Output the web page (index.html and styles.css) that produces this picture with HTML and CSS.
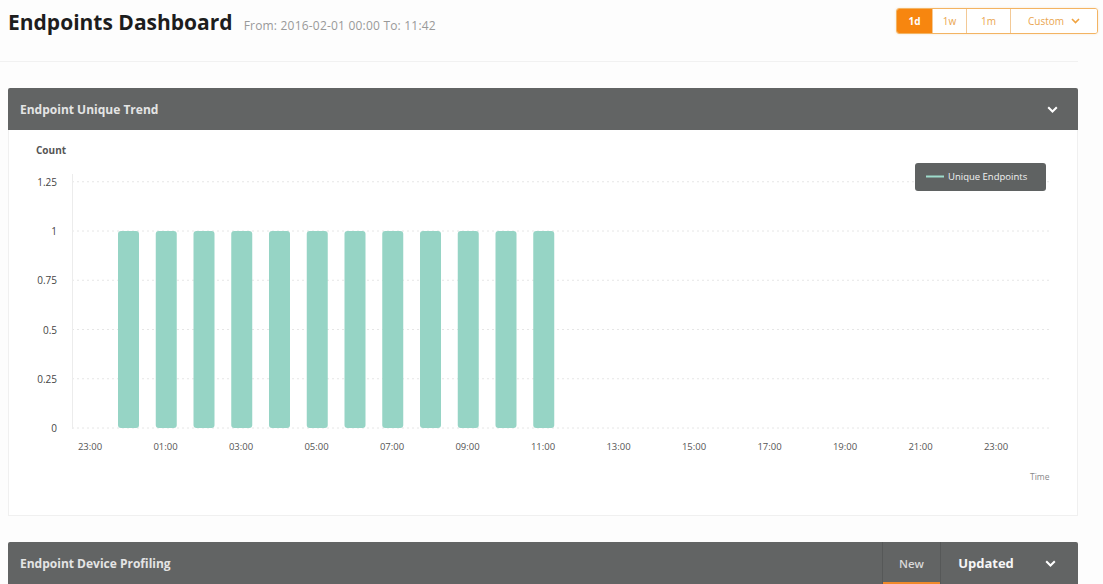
FILE: index.html
```html
<!DOCTYPE html>
<html lang="en">
<head>
  <meta charset="UTF-8" />
  <meta name="viewport" content="width=device-width, initial-scale=1.0" />
  <title>Endpoints Dashboard</title>
  <link rel="stylesheet" href="styles.css">
</head>
<body>
  <div class="page">
    <div class="top">
      <div class="title-wrap">
        <h1>Endpoints Dashboard</h1>
        <span class="range-text">From: 2016-02-01 00:00 To: 11:42</span>
      </div>
      <div class="ranges">
        <span class="rng active">1d</span>
        <span class="rng">1w</span>
        <span class="rng">1m</span>
        <span class="rng custom">Custom
          <svg width="9" height="6" viewBox="0 0 9 6"><path d="M1 1l3.5 3.5L8 1" fill="none" stroke="#f0a340" stroke-width="1.6"/></svg>
        </span>
      </div>
    </div>

    <div class="panel">
      <div class="panel-head">
        <span class="panel-title">Endpoint Unique Trend</span>
        <svg class="chev" width="11" height="7" viewBox="0 0 11 7"><path d="M1.2 1.2l4.3 4.3 4.3-4.3" fill="none" stroke="#fff" stroke-width="2"/></svg>
      </div>
      <div class="panel-body">
        <svg class="chart" width="1068" height="385" viewBox="0 0 1068 385">
          <text x="27" y="24" class="axis-title">Count</text>

          <g class="grid">
            <line x1="63" y1="51.75" x2="1042" y2="51.75"/>
            <line x1="63" y1="101" x2="1042" y2="101"/>
            <line x1="63" y1="150.25" x2="1042" y2="150.25"/>
            <line x1="63" y1="199.5" x2="1042" y2="199.5"/>
            <line x1="63" y1="248.75" x2="1042" y2="248.75"/>
            <line x1="63" y1="298" x2="1042" y2="298"/>
          </g>
          <line x1="63.5" y1="44" x2="63.5" y2="299" class="yaxis"/>

          <g class="ylab">
            <text x="48" y="56">1.25</text>
            <text x="48" y="105">1</text>
            <text x="48" y="154">0.75</text>
            <text x="48" y="204">0.5</text>
            <text x="48" y="253">0.25</text>
            <text x="48" y="302">0</text>
          </g>

          <g class="bars">
            <rect x="109" y="101" width="21" height="197" rx="3"/>
            <rect x="146.75" y="101" width="21" height="197" rx="3"/>
            <rect x="184.5" y="101" width="21" height="197" rx="3"/>
            <rect x="222.25" y="101" width="21" height="197" rx="3"/>
            <rect x="260" y="101" width="21" height="197" rx="3"/>
            <rect x="297.75" y="101" width="21" height="197" rx="3"/>
            <rect x="335.5" y="101" width="21" height="197" rx="3"/>
            <rect x="373.25" y="101" width="21" height="197" rx="3"/>
            <rect x="411" y="101" width="21" height="197" rx="3"/>
            <rect x="448.75" y="101" width="21" height="197" rx="3"/>
            <rect x="486.5" y="101" width="21" height="197" rx="3"/>
            <rect x="524.25" y="101" width="21" height="197" rx="3"/>
          </g>

          <g class="xlab">
            <text x="81" y="320">23:00</text>
            <text x="156.5" y="320">01:00</text>
            <text x="232" y="320">03:00</text>
            <text x="307.5" y="320">05:00</text>
            <text x="383" y="320">07:00</text>
            <text x="458.5" y="320">09:00</text>
            <text x="534" y="320">11:00</text>
            <text x="609.5" y="320">13:00</text>
            <text x="685" y="320">15:00</text>
            <text x="760.5" y="320">17:00</text>
            <text x="836" y="320">19:00</text>
            <text x="911.5" y="320">21:00</text>
            <text x="987" y="320">23:00</text>
          </g>

          <text x="1021" y="350" class="axis-note">Time</text>

          <rect x="906" y="33" width="131" height="28" rx="3" class="legend-box"/>
          <line x1="917" y1="46.5" x2="935" y2="46.5" class="legend-line"/>
          <text x="939" y="50" class="legend-text">Unique Endpoints</text>
        </svg>
      </div>
    </div>

    <div class="panel panel-second">
      <div class="panel-head">
        <span class="panel-title">Endpoint Device Profiling</span>
        <div class="tabs">
          <span class="tab tab-new">New</span>
          <span class="tab tab-updated">Updated</span>
          <svg class="chev" width="11" height="7" viewBox="0 0 11 7"><path d="M1.2 1.2l4.3 4.3 4.3-4.3" fill="none" stroke="#fff" stroke-width="2"/></svg>
        </div>
      </div>
    </div>
  </div>
</body>
</html>
```

FILE: styles.css
```css
body {
  margin: 0;
  background: #fdfdfd;
  font-family: "Open Sans", Arial, sans-serif;
  color: #333;
  overflow: hidden;
}
.page {
  padding: 0 5px 0 8px;
}
.top {
  display: flex;
  justify-content: space-between;
  align-items: flex-start;
  height: 61px;
  border-bottom: 1px solid #f1f1f1;
  margin-right: 20px;
  margin-left: -8px;
  padding-left: 8px;
}
.title-wrap {
  display: flex;
  align-items: baseline;
  padding-top: 8px;
}
h1 {
  margin: 0;
  font-size: 21px;
  font-weight: 700;
  color: #1d1d1d;
  letter-spacing: 0;
}
.range-text {
  margin-left: 11px;
  font-size: 12px;
  color: #999;
  letter-spacing: 0.2px;
}
.ranges {
  display: flex;
  margin-top: 8px;
  margin-right: -20px;
  border: 1px solid #f3b463;
  border-radius: 3px;
  height: 24px;
  overflow: hidden;
  box-shadow: 0 0 2px rgba(240, 160, 60, 0.3);
}
.rng {
  display: flex;
  align-items: center;
  justify-content: center;
  font-size: 10px;
  color: #eaa54f;
  border-left: 1px solid #f3c996;
  width: 33px;
  background: #fff;
}
.rng:first-child {
  border-left: none;
}
.rng.active {
  background: #f7860f;
  color: #fff;
  font-weight: 700;
  width: 35px;
}
.rng:nth-child(3) {
  width: 43px;
}
.rng.custom {
  width: 86px;
  gap: 7px;
}
.panel {
  margin-top: 26px;
  margin-right: 20px;
}
.panel-head {
  display: flex;
  align-items: center;
  justify-content: space-between;
  height: 42px;
  background: #626464;
  border-radius: 2px 2px 0 0;
  padding: 0 20px 0 12px;
}
.panel-title {
  font-size: 12px;
  font-weight: 700;
  color: #e4e4e4;
}
.chev {
  display: block;
}
.panel-body {
  height: 385px;
  background: #fff;
  border: 1px solid #f0f0f0;
  border-top: none;
}
.chart {
  display: block;
}
.axis-title {
  font-size: 10px;
  font-weight: 700;
  fill: #555;
}
.grid line {
  stroke: #e6e6e6;
  stroke-width: 1;
  stroke-dasharray: 2 3;
}
.yaxis {
  stroke: #ececec;
  stroke-width: 1;
}
.ylab text {
  font-size: 10px;
  fill: #444;
  text-anchor: end;
}
.bars rect {
  fill: #96d4c5;
}
.xlab text {
  font-size: 9.5px;
  fill: #555;
  text-anchor: middle;
}
.axis-note {
  font-size: 8.5px;
  fill: #888;
}
.legend-box {
  fill: #5f6262;
}
.legend-line {
  stroke: #9fdccc;
  stroke-width: 2;
}
.legend-text {
  font-size: 9.5px;
  fill: #f2f2f2;
}
.panel-second {
  margin-top: 26px;
}
.tabs {
  display: flex;
  align-items: stretch;
  height: 42px;
  margin-right: -20px;
}
.tab {
  display: flex;
  align-items: center;
  justify-content: center;
  color: #ddd;
}
.tab-new {
  width: 57px;
  font-size: 11.5px;
  font-weight: 600;
  color: #d8d8d8;
  border-left: 1px solid #565858;
  border-right: 1px solid #565858;
  box-shadow: inset 0 -2px 0 #f0892a;
}
.tab-updated {
  width: 90px;
  font-size: 13px;
  font-weight: 700;
  color: #f6f6f6;
}
.tabs .chev {
  align-self: center;
  margin: 0 22px 0 14px;
}
```
